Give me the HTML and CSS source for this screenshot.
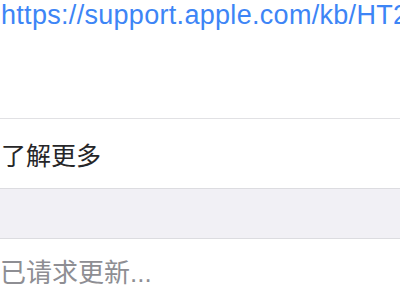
FILE: index.html
```html
<!DOCTYPE html>
<html lang="zh-CN">
<head>
    <meta charset="UTF-8">
    <meta name="viewport" content="width=device-width, initial-scale=1.0">
    <title>了解更多</title>
    <link rel="stylesheet" href="styles.css">
</head>
<body>
    <div class="page">
        <div class="link-block">
            <a class="link" href="#">https://support.apple.com/kb/HT201441</a>
        </div>
        <div class="cell">了解更多</div>
        <div class="group-gap"></div>
        <div class="status">已请求更新...</div>
    </div>
</body>
</html>
```

FILE: styles.css
```css
body {
    margin: 0;
    background: #ffffff;
    font-family: "Liberation Sans", "Noto Sans CJK SC", sans-serif;
    overflow: hidden;
}
.page {
    width: 400px;
    height: 300px;
    overflow: hidden;
}
.link-block {
    height: 118px;
    padding-left: 1px;
    white-space: nowrap;
    overflow: hidden;
}
.link {
    display: block;
    font-size: 27px;
    line-height: 30px;
    letter-spacing: 0.3px;
    color: #3d85f6;
    text-decoration: none;
}
.cell {
    height: 69px;
    border-top: 1px solid #e1e1e4;
    border-bottom: 1px solid #dcdce0;
    display: flex;
    align-items: center;
    padding-left: 1px;
    font-size: 25px;
    color: #262628;
}
.group-gap {
    height: 49px;
    background: #f1f0f5;
    border-bottom: 1px solid #dcdce0;
}
.status {
    padding-top: 19px;
    font-size: 26px;
    line-height: 30px;
    color: #8e8e93;
}
```
